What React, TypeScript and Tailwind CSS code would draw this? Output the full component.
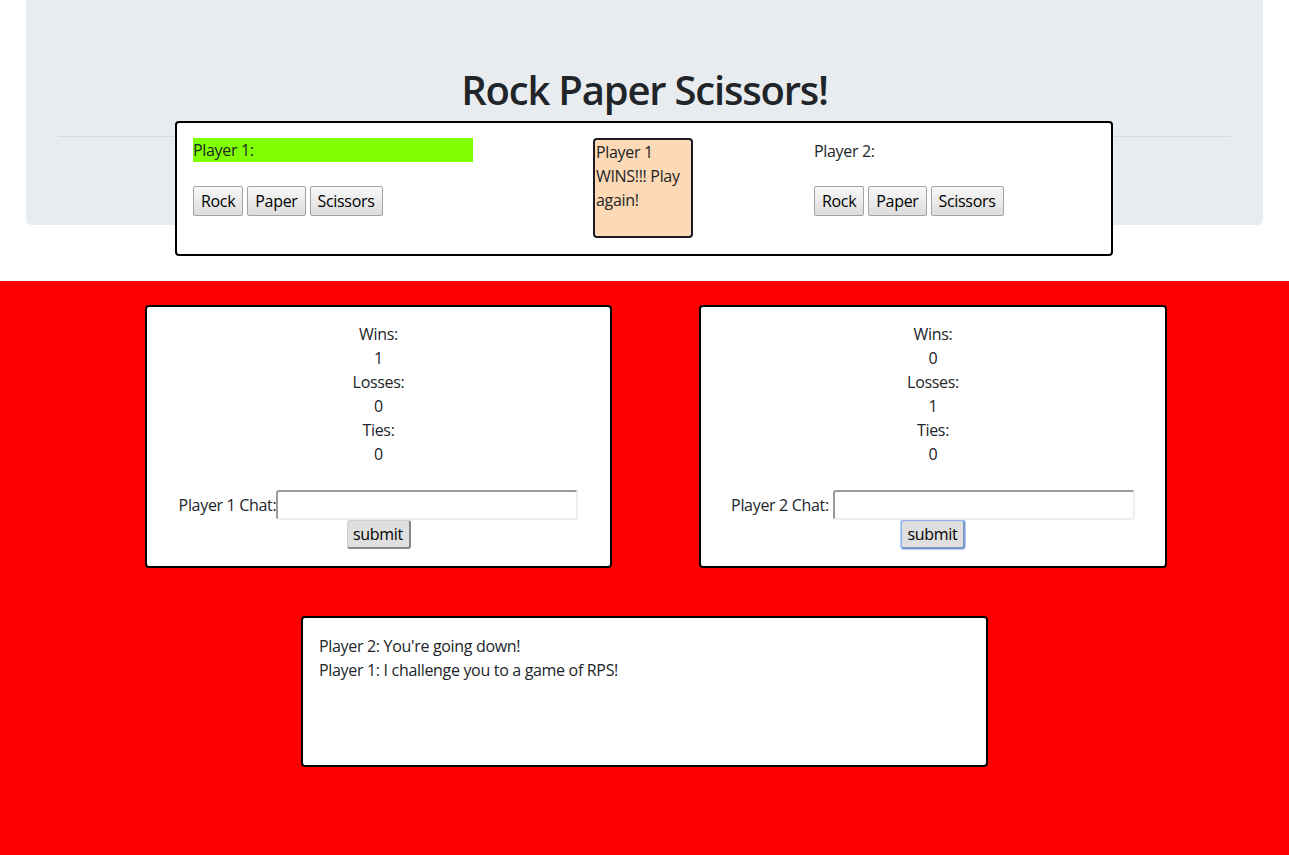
import React from "react";

const font = "font-['Open_Sans','Noto_Sans',sans-serif]";

function GameButton({ label }: { label: string }) {
  return (
    <button className="h-[30px] px-[7px] border border-[#a3a3a3] rounded-[2px] bg-gradient-to-b from-[#f8f8f8] to-[#dddddd] text-[16px] leading-6 text-black">
      {label}
    </button>
  );
}

function Buttons() {
  return (
    <div className="flex gap-1">
      <GameButton label="Rock" />
      <GameButton label="Paper" />
      <GameButton label="Scissors" />
    </div>
  );
}

function StatsBox({ stats, player, focused, width }: { stats: number[]; player: number; focused?: boolean; width: string }) {
  const labels = ["Wins:", "Losses:", "Ties:"];
  return (
    <div className={`${width} h-[263px] bg-white border-2 border-black rounded-[4px] pt-[15px] text-center`}>
      {labels.map((l, i) => (
        <div key={l}>
          <div>{l}</div>
          <div>{stats[i]}</div>
        </div>
      ))}
      <div className="mt-6 flex justify-center items-center">
        <span className={player === 2 ? "mr-[4px]" : ""}>Player {player} Chat:</span>
        <input className="w-[302px] h-[30px] border-2 border-t-[#999999] border-l-[#999999] border-b-[#eeeeee] border-r-[#eeeeee] rounded-[3px] bg-white outline-none" />
      </div>
      <button
        className={
          "block mx-auto h-[29px] w-[64px] bg-[#dfdfdf] rounded-[3px] border border-b-2 border-r-2 text-black " +
          (focused
            ? "border-t-[#8ab0ee] border-l-[#8ab0ee] border-b-[#7d96c4] border-r-[#7d96c4] ring-1 ring-[#b7cff7]"
            : "border-t-[#d0d0d0] border-l-[#d0d0d0] border-b-[#858585] border-r-[#858585]")
        }
      >
        submit
      </button>
    </div>
  );
}

export default function App() {
  return (
    <div className={`${font} min-h-screen bg-white text-[#212529] text-[16px] leading-6 tracking-[-0.02em]`}>
      <div className="relative h-[281px]">
        <div className="mx-[26px] h-[225px] bg-[#e9ecef] rounded-b-[5px] px-8 pt-[66px]">
          <h1 className="h-12 text-center text-[40px] leading-[48px] font-[550] tracking-[-0.03em]">Rock Paper Scissors!</h1>
          <hr className="mt-[22px] border-t border-[#d7dadd]" />
        </div>

        <div className="absolute left-[175px] top-[121px] w-[938px] h-[135px] bg-white border-2 border-black rounded-[4px] pl-4 pt-[15px] flex">
          <div className="w-[400px]">
            <div className="w-[280px] h-6 bg-[#80ff00]">Player 1:</div>
            <div className="mt-6">
              <Buttons />
            </div>
          </div>
          <div className="w-[221px]">
            <div className="w-[100px] h-[100px] bg-[#fdd9b5] border-2 border-[#1c1a24] rounded-[4px] px-px">
              Player 1 WINS!!! Play again!
            </div>
          </div>
          <div>
            <div className="mt-px">Player 2:</div>
            <div className="mt-[23px]">
              <Buttons />
            </div>
          </div>
        </div>
      </div>

      <div className="bg-[#ff0000] h-[574px] pt-6">
        <div className="flex pl-[145px] gap-[87px]">
          <StatsBox stats={[1, 0, 0]} player={1} width="w-[467px]" />
          <StatsBox stats={[0, 1, 0]} player={2} width="w-[468px]" focused />
        </div>
        <div className="ml-[301px] mt-[48px] w-[687px] h-[151px] bg-white border-2 border-black rounded-[4px] pl-4 pt-4">
          <div>Player 2: You're going down!</div>
          <div>Player 1: I challenge you to a game of RPS!</div>
        </div>
      </div>
    </div>
  );
}
